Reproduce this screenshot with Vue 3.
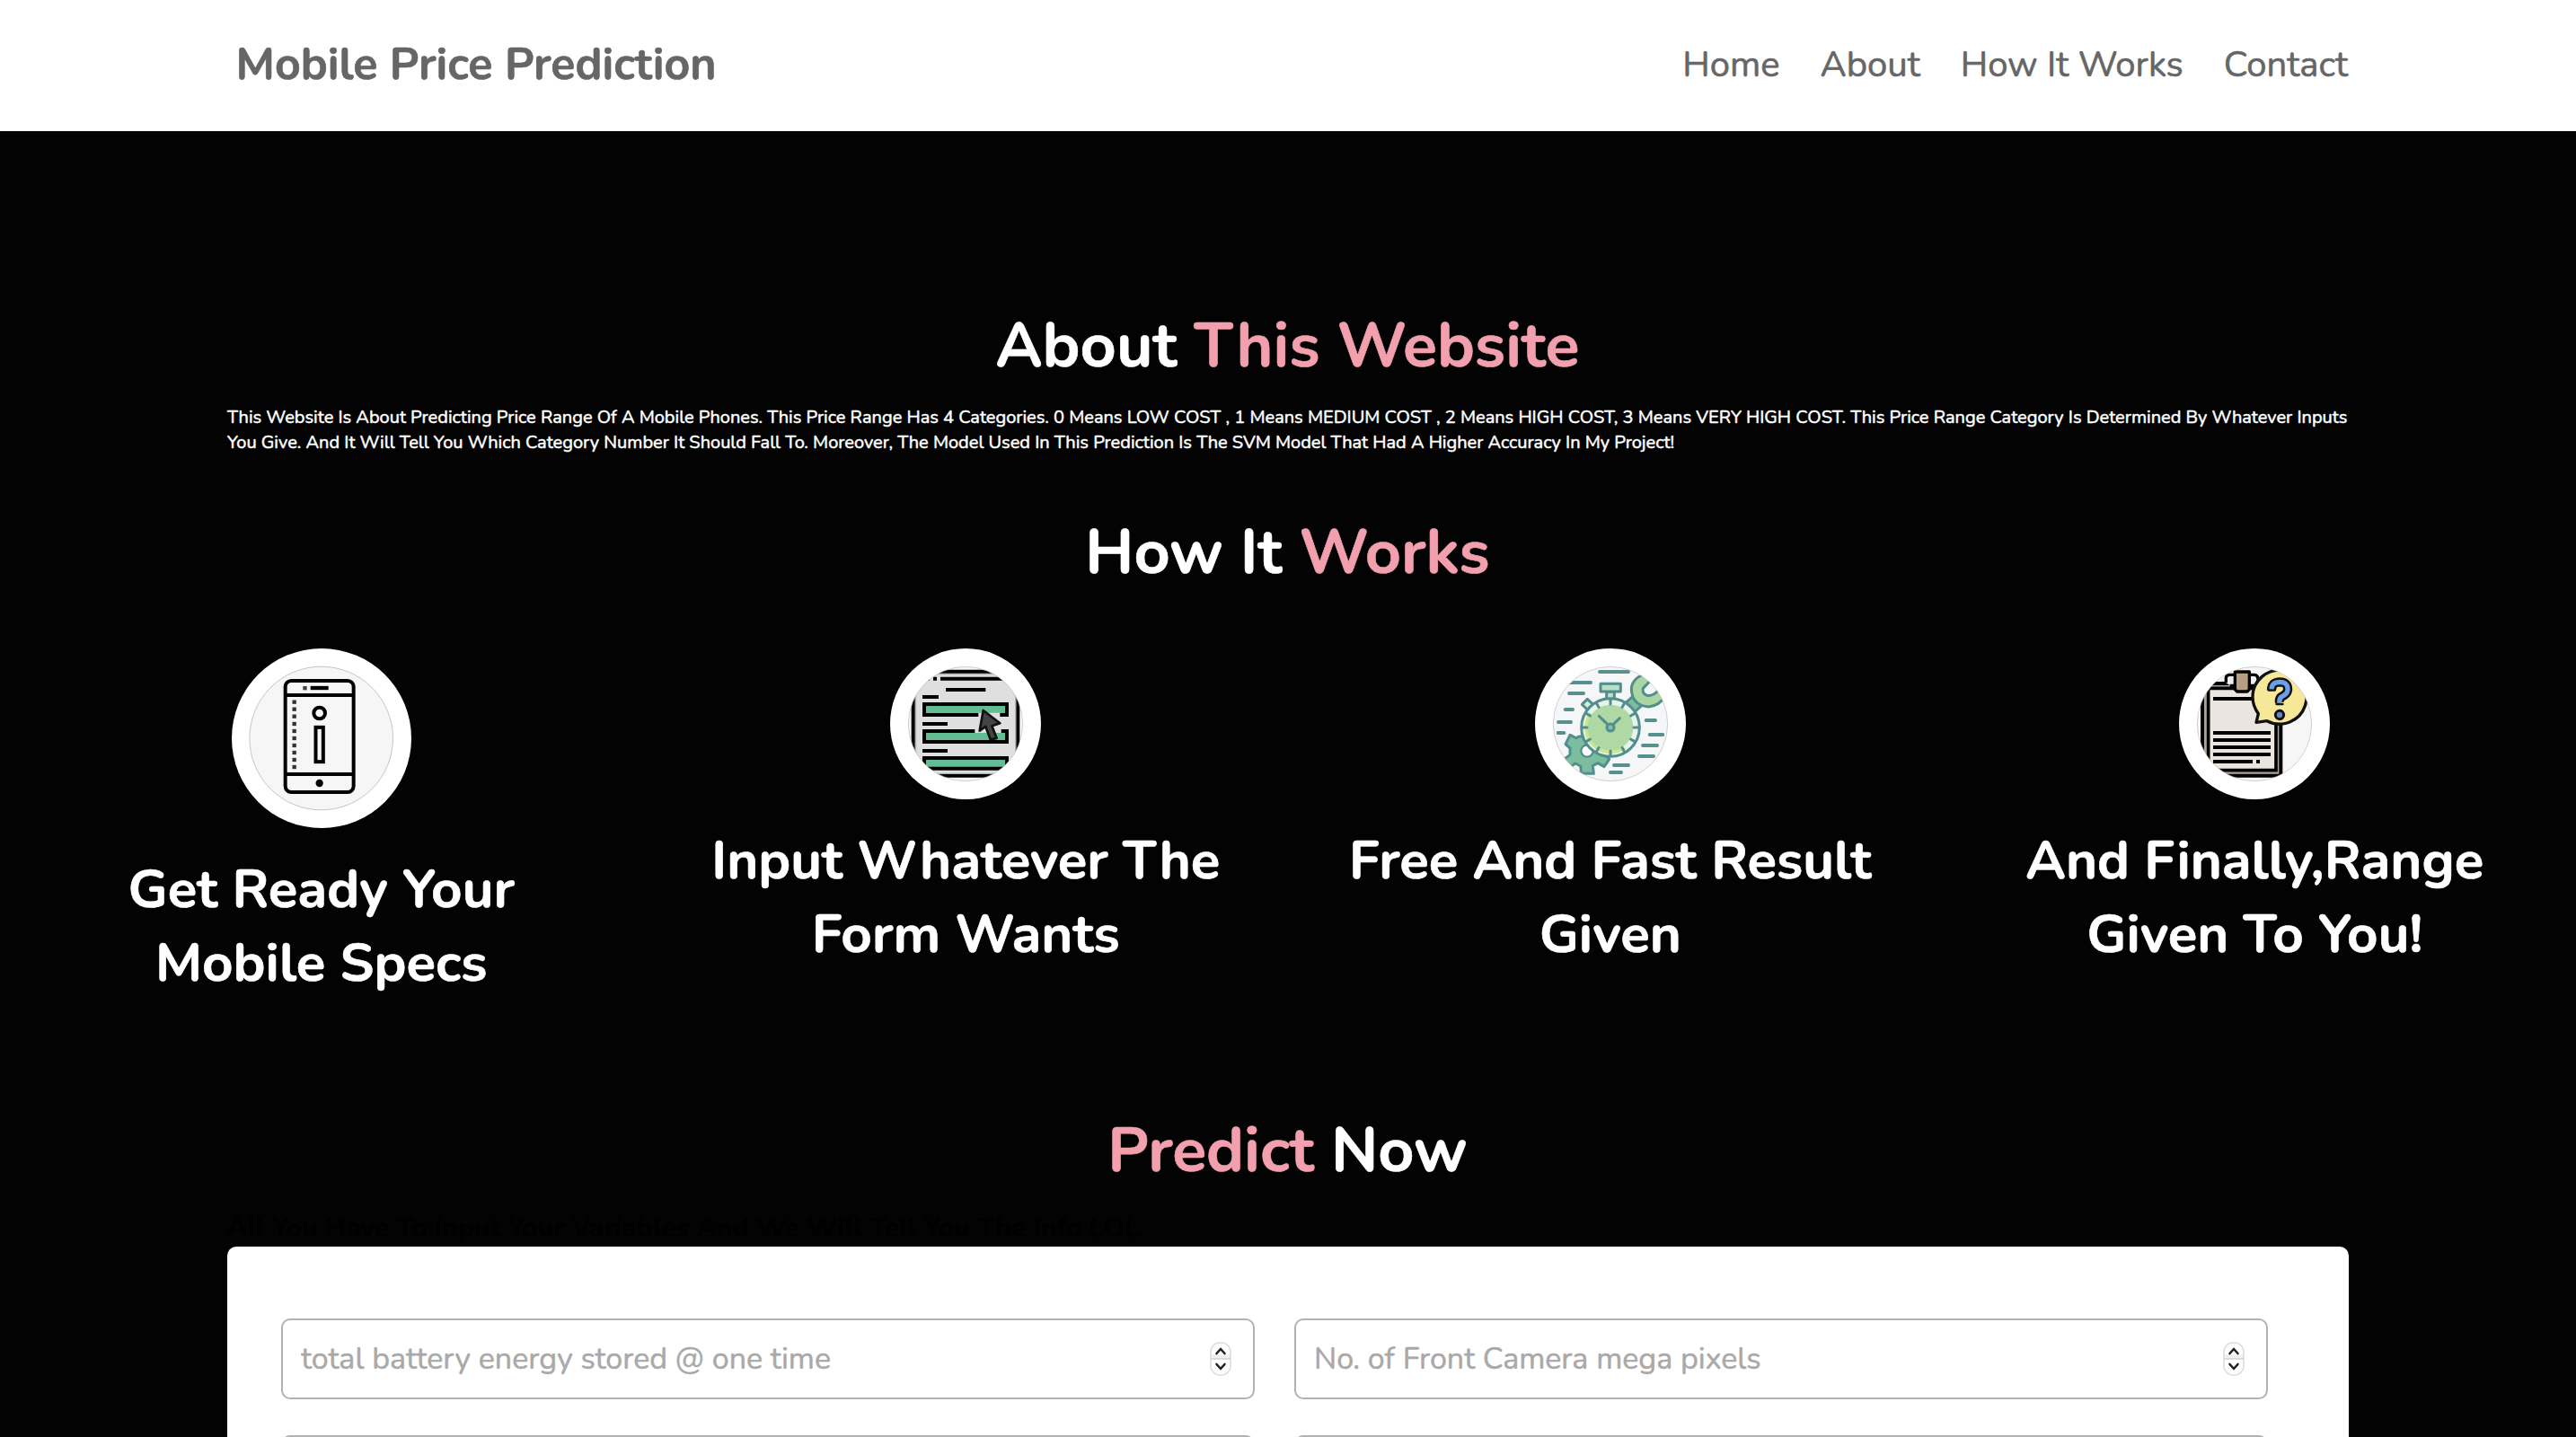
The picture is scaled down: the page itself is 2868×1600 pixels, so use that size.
<script setup>
const links = ['Home', 'About', 'How It Works', 'Contact']
const steps = [
  { icon: 'phone', box: '55 66 600 600', lines: ['Get Ready Your', 'Mobile Specs'] },
  { icon: 'form', box: '63 66 504 504', lines: ['Input Whatever The', 'Form Wants'] },
  { icon: 'timer', box: '57 66 504 504', lines: ['Free And Fast Result', 'Given'] },
  { icon: 'clipboard', box: '78 66 504 504', lines: ['And Finally,Range', 'Given To You!'] }
]
const fields = ['total battery energy stored @ one time', 'No. of Front Camera mega pixels', '', '']
const dots = [245, 269, 293, 318, 342, 366, 390, 414, 438, 462]
const ticks = [0, 30, 60, 90, 120, 150, 180, 210, 240, 270, 300, 330]
</script>

<template>
  <div class="page">
    <header class="header">
      <a class="logo">Mobile Price Prediction</a>
      <nav class="nav"><a v-for="l in links" :key="l">{{ l }}</a></nav>
    </header>

    <section class="about">
      <h1 class="heading">About <span>This Website</span></h1>
      <p>This Website Is About Predicting Price Range Of A Mobile Phones. This Price Range Has 4 Categories. 0 Means LOW COST , 1 Means MEDIUM COST , 2 Means HIGH COST, 3 Means VERY HIGH COST. This Price Range Category Is Determined By Whatever Inputs<br>You Give. And It Will Tell You Which Category Number It Should Fall To. Moreover, The Model Used In This Prediction Is The SVM Model That Had A Higher Accuracy In My Project!</p>
    </section>

    <section class="works">
      <h1 class="heading">How It <span>Works</span></h1>
      <div class="steps">
        <div v-for="s in steps" :key="s.icon" class="step">
          <div class="circle" :class="{ large: s.icon === 'phone' }">
            <svg :viewBox="s.box">
              <g v-if="s.icon === 'phone'">
                <circle cx="354" cy="366" r="239.5" fill="#f6f6f6" stroke="#aaa" stroke-width="2" />
                <g fill="none" stroke="#000" stroke-width="12">
                  <rect x="234" y="174" width="228" height="372" rx="20" />
                  <path d="M234 222H462M234 486H462" />
                  <circle cx="348" cy="282" r="19" />
                  <rect x="335.500" y="329.500" width="25" height="115" />
                </g>
                <path d="M318 198H378" stroke="#000" stroke-width="13" />
                <rect x="293" y="192" width="13" height="13" fill="#444" />
                <rect v-for="y in dots" :key="y" x="257.500" :y="y - 6.5" width="13" height="13" fill="#333" />
                <circle cx="348" cy="516" r="12.500" />
              </g>

              <g v-else-if="s.icon === 'form'">
                <clipPath id="c-form"><circle cx="315" cy="318" r="191" /></clipPath>
                <g clip-path="url(#c-form)">
                  <path fill="#f6f6f6" d="M120 120H510V515H120z" />
                  <path fill="#dfdfdf" stroke="#000" stroke-width="12" d="M140 143H490V491H140z" />
                  <path stroke="#aaa" stroke-width="3" d="M146 152H484M149 150V482M482 150V482M146 484H484" />
                  <g stroke="#000" stroke-width="12">
                    <path d="M231 167H460M207 167H219M180 167H195M249 204H382M171 228H225M171 318H255M171 408H255" />
                    <g fill="#62bd94">
                      <path d="M177 252H453V288H177zM177 342H453V378H177zM177 432H453V467H177z" />
                    </g>
                  </g>
                  <path stroke="#dfdfdf" stroke-width="13" d="M358 288H430M346 342H434" />
                  <path fill="#62bd94" d="M346 348H434V370H346z" />
                  <path fill="#444" stroke="#111" stroke-width="8" stroke-linejoin="round" d="M374 273L362 341L382 327L398 370L419 366L403 325L430 316z" />
                </g>
                <circle cx="315" cy="318" r="191" fill="none" stroke="#bbb" stroke-width="2" />
              </g>

              <g v-else-if="s.icon === 'timer'">
                <clipPath id="c-timer"><circle cx="309" cy="318" r="191" /></clipPath>
                <g clip-path="url(#c-timer)">
                  <path fill="#f5f6f7" d="M110 120H510V515H110z" />
                  <path fill="none" stroke="#57908f" stroke-width="12" stroke-linecap="round" d="M273 144H369M172 180H243M171 216H219M158 270H183M135 312H177M134 348H154M428 306H459M440 354H484M417 390H465M405 426H453M321 456H369M309 480H345" />
                  <path fill="#7dbd9f" stroke="#528e8c" stroke-width="9" stroke-linejoin="round" d="M174 355L194 365Q205 358 216 360L300 430L305 436L288 461L267 449L250 458L253 484H212L209 459L192 450L174 462L154 436L174 421V399L159 386z" />
                  <circle cx="231" cy="408" r="20" fill="#fff" stroke="#528e8c" stroke-width="7" />
                  <g stroke-linejoin="round" stroke="#528e8c" stroke-width="9">
                    <path fill="#7dbd9f" d="M360 247L384 226L414 256L389 279z" />
                    <path fill="#a9d6a2" d="M418 153Q373 173 380 212Q386 257 437 261Q472 257 495 223L471 203Q455 224 434 224Q414 218 418 199L450 166L434 150z" />
                    <path fill="#d6ebdf" d="M232 235L251 253L233 271L214 253z" />
                    <path fill="#b9dfc5" d="M296 211H322V236H296zM276 184H343V210H276z" />
                    <circle cx="309" cy="330" r="97" fill="#e6f4ec" />
                  </g>
                  <path fill="#c9e58e" d="M239 279A87 87 0 0 0 360 401z" />
                  <circle cx="309" cy="330" r="76" fill="#aed9a4" />
                  <g stroke="#528e8c" stroke-width="9" stroke-linecap="round">
                    <path v-for="t in ticks" :key="t" d="M309 238V252" :transform="`rotate(${t} 309 330)`" />
                    <path d="M271 292L302 322M340 299L317 321" />
                    <circle cx="309" cy="330" r="12" fill="#7fc0ab" />
                  </g>
                </g>
                <circle cx="309" cy="318" r="191" fill="none" stroke="#bbb" stroke-width="2" />
              </g>

              <g v-else>
                <clipPath id="c-clip"><circle cx="330" cy="318" r="191" /></clipPath>
                <g clip-path="url(#c-clip)">
                  <path fill="#f6f6f6" d="M130 120H530V515H130z" />
                  <path fill="#aaa3a0" stroke="#000" stroke-width="12" d="M156 183H418V491H156z" />
                  <path fill="#ebe5df" stroke="#000" stroke-width="11" d="M176 199H402V473H176z" />
                  <path fill="none" stroke="#000" stroke-width="12" d="M192 234H330M192 348H384M192 372H384M192 396H384M192 420H384M192 444H324M336 444H348" />
                  <path fill="#eee" stroke="#000" stroke-width="10" stroke-linejoin="round" d="M235 180V163Q236 154 248 154H330Q342 155 342 170V190H248" />
                  <path fill="#b69f82" stroke="#000" stroke-width="10" stroke-linejoin="round" d="M265 144H313V203L306 210H272L265 203z" />
                  <path fill="#f7e799" stroke="#111" stroke-width="10" stroke-linejoin="round" d="M343 284C330 266 324 248 324 229A90 90 0 1 1 372 308L336 313z" />
                  <g fill="none" stroke-linejoin="round">
                    <path stroke="#111" stroke-width="31" d="M387 205Q388 178 415 178Q443 179 441 205Q439 219 421 227Q412 233 414 247" />
                    <path stroke="#111" stroke-width="8" stroke-linecap="round" d="M377 205H398M404 252H424" />
                    <path stroke="#6b9fe8" stroke-width="16" d="M387 202Q388 178 415 178Q443 179 441 205Q439 219 421 227Q412 233 414 247" />
                    <circle cx="414" cy="288" r="14" fill="#6b86bd" stroke="#111" stroke-width="9" />
                  </g>
                </g>
                <circle cx="330" cy="318" r="191" fill="none" stroke="#bbb" stroke-width="2" />
              </g>
            </svg>
          </div>
          <h3><template v-for="(t, i) in s.lines" :key="t"><br v-if="i">{{ t }}</template></h3>
        </div>
      </div>
    </section>

    <section class="predict">
      <h1 class="heading"><span>Predict</span> Now</h1>
      <h4>All You Have To Input Your Variables And We Will Tell You The Info LOL</h4>
      <form>
        <div v-for="(f, i) in fields" :key="i" class="field">
          <input type="number" :placeholder="f">
          <svg class="spinner" viewBox="0 0 24 38">
            <rect x="1" y="1" width="22" height="36" rx="10" fill="#fff" stroke="#dcdcdc" stroke-width="1.500" />
            <path d="M2 14H22V19H2z" fill="#f1f1f1" />
            <path d="M1 19H23" stroke="#d2d2d2" stroke-width="1.500" />
            <path d="M7.500 13L12 8L16.500 13M7.500 25L12 30L16.500 25" fill="none" stroke="#222" stroke-width="2.600" stroke-linecap="round" stroke-linejoin="round" />
          </svg>
        </div>
      </form>
    </section>
  </div>
</template>

<style>
body { background: #030303; }
</style>

<style scoped>
.page {
  height: 1600px;
  overflow: hidden;
  background: #030303;
  color: #fff;
  font-family: "Nunito", "Lato", sans-serif;
}
.page * { box-sizing: border-box; }
h1, h3, h4, p { margin: 0; }
.header {
  display: flex;
  align-items: center;
  justify-content: space-between;
  height: 146px;
  padding: 0 254px 3px 262.5px;
  background: #fff;
  color: #666;
}
.logo { font-size: 50px; font-weight: 700; -webkit-text-stroke: 0.6px currentColor; }
.nav { display: flex; gap: 45px; font-size: 40px; -webkit-text-stroke: 0.6px currentColor; }
.heading {
  height: 96px;
  padding-right: 1px;
  font-size: 70px;
  font-weight: 700;
  line-height: 96px;
  text-align: center;
  -webkit-text-stroke: 0.6px currentColor;
}
.heading span { color: #f29fae; }
.about { padding: 191px 253px 0; }
.about p {
  margin-top: 18px;
  font-size: 20px;
  line-height: 28px;
  font-weight: 400;
  white-space: nowrap;
  -webkit-text-stroke: 0.5px currentColor;
}
.works { padding-top: 60px; }
.steps { display: flex; height: 510px; margin: 0 -1px; padding-top: 59px; }
.step {
  display: flex;
  flex: 1;
  flex-direction: column;
  align-items: center;
}
.circle {
  flex: none;
  width: 168px;
  height: 168px;
  border-radius: 50%;
  background: #fff;
}
.circle.large { width: 200px; height: 200px; }
.circle svg { display: block; width: 100%; height: 100%; }
.step h3 {
  margin-top: 27px;
  font-size: 60px;
  font-weight: 700;
  line-height: 82px;
  text-align: center;
  -webkit-text-stroke: 0.6px currentColor;
}
.predict { margin-top: 60px; padding: 0 253px; }
.predict h4 {
  height: 41px;
  margin-top: 18px;
  color: #000;
  font-size: 30px;
  font-weight: 700;
  line-height: 41px;
  letter-spacing: 0.09px;
}
form {
  display: grid;
  grid-template-columns: 1084px 1084px;
  align-content: start;
  gap: 40px 44px;
  height: 400px;
  padding: 80px 60px;
  border-radius: 10px;
  background: #fff;
}
.field {
  display: flex;
  align-items: center;
  height: 90px;
  padding: 0 24px 0 20px;
  border: 2px solid #b2b2b2;
  border-radius: 10px;
}
input {
  flex: 1;
  min-width: 0;
  padding: 0;
  border: 0;
  outline: 0;
  background: none;
  font: 34px "Nunito", "Lato", sans-serif;
  appearance: textfield;
}
input::placeholder { color: #a9a9a9; opacity: 1; -webkit-text-stroke: 0.5px #a9a9a9; }
.spinner { width: 24px; height: 38px; }
</style>
